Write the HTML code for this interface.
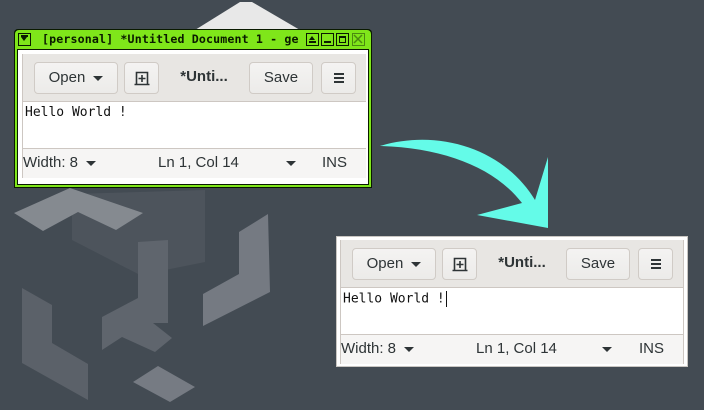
<!DOCTYPE html>
<html><head><meta charset="utf-8"><style>
*{margin:0;padding:0;box-sizing:border-box}
body{width:704px;height:410px;background:#434b53;position:relative;overflow:hidden;font-family:"Liberation Sans","DejaVu Sans",sans-serif}
.abs{position:absolute}
.win{position:absolute;width:344px;height:124px;background:#e8e6e3}
.tb{position:absolute;left:0;top:0;width:100%;height:48px;background:#e8e6e3;border-bottom:1px solid #cdc7c2}
.btn{position:absolute;top:8px;height:32px;background:linear-gradient(#f4f3f2,#ecebe9);border:1px solid #d0cbc6;border-radius:4px;font-size:15px;color:#2e3436;line-height:30px;text-align:center}
.txt{position:absolute;left:0;top:48px;width:100%;height:47px;background:#fff;border-bottom:1px solid #cdc7c2}
.mono{position:absolute;left:2px;top:3px;font-family:"DejaVu Sans Mono","Liberation Mono",monospace;font-size:13px;color:#111;white-space:nowrap}
.st{position:absolute;left:0;top:95px;width:100%;height:29px;background:#f6f5f4;font-size:15px;color:#2e3436;line-height:28px}
.si{position:absolute;top:0;white-space:nowrap}
.tri{display:inline-block;width:0;height:0;border-left:5px solid transparent;border-right:5px solid transparent;border-top:5px solid #2e3436;vertical-align:middle;margin-left:8px}
.tbx{position:absolute;top:3px;width:13px;height:13px;border:1.5px solid #0a1a00;background:#7fe61a}
</style></head><body>
<svg class="abs" style="left:0;top:0" width="704" height="410">
<polygon points="195,30 240,2 252,2 300,30" fill="#e8e8e8"/>
<polygon points="72,194 205,190 205,262 140,275 72,240" fill="#4d545c"/>
<polygon points="14,213 70,188 143,213 116,230 78,212 43,231" fill="#858a90"/>
<polygon points="239,232 268,214 270,292 203,326 203,294 239,274" fill="#757a82"/>
<polygon points="22,288 52,305 52,343 88,364 88,400 22,363" fill="#5b6169"/>
<polygon points="102,317 138,298 138,242 168,240 168,323 153,323 172,338 155,352 122,337 102,350" fill="#5f656d"/>
<polygon points="133,382 158,366 195,387 170,402" fill="#767b83"/>
<path d="M380,146 C440,128 505,150 535,200 L548,157 L548,228 L477,215 L522,203 C495,168 445,148 380,146 Z" fill="#64fbe8"/>
</svg>

<div class="abs" style="left:14px;top:29px;width:358px;height:159px;background:#0a1a00;border-radius:4px 4px 0 0"></div>
<div class="abs" style="left:15px;top:30px;width:356px;height:157px;background:#7fe61a;border-radius:4px 4px 0 0"></div>
<div class="abs" style="left:17px;top:49px;width:352px;height:136px;background:#0a1a00"></div>
<div class="abs" style="left:18px;top:50px;width:350px;height:134px;background:#fff"></div>
<div class="tbx" style="left:18px;top:33px"><div style="position:absolute;left:2px;top:3px;border-left:3.5px solid transparent;border-right:3.5px solid transparent;border-top:4px solid #0a1a00"></div><div style="position:absolute;left:2px;top:1px;width:7px;height:1.5px;background:#0a1a00"></div></div>
<div class="abs" style="left:42px;top:32px;font-family:'DejaVu Sans Mono',monospace;font-weight:bold;font-size:11.6px;letter-spacing:0.15px;color:#0a1a00;white-space:nowrap;width:260px;overflow:hidden">[personal] *Untitled Document 1 - ge</div>
<div class="tbx" style="left:306px;top:33px"><div style="position:absolute;left:2px;top:2px;border-left:3.5px solid transparent;border-right:3.5px solid transparent;border-bottom:4px solid #0a1a00"></div><div style="position:absolute;left:2px;top:7px;width:7px;height:1.5px;background:#0a1a00"></div></div>
<div class="tbx" style="left:321px;top:33px"><div style="position:absolute;left:2px;top:7px;width:7px;height:2px;background:#0a1a00"></div></div>
<div class="tbx" style="left:336px;top:33px"><div style="position:absolute;left:1.5px;top:1.5px;width:7px;height:7px;border:1.5px solid #0a1a00;border-top-width:2.5px"></div></div>
<div class="tbx" style="left:352px;top:33px;border-color:#4a8a10"><svg width="10" height="10" style="position:absolute;left:0;top:0"><path d="M1,1 L9,9 M9,1 L1,9" stroke="#4a8a10" stroke-width="1.5"/></svg></div>

<div class="win" style="left:22px;top:54px;border-left:1px solid #cdc7c2">
 <div class="tb"></div>
 <div class="btn" style="left:11px;width:84px">Open<span class="tri"></span></div>
 <div class="btn" style="left:101px;width:35px"><svg width="16" height="16" style="margin-top:7px"><path d="M2.5,14.5 V2.5 H13.5 V14.5 M0.5,14.5 H15.5 M8,5 V12 M4.5,8.5 H11.5" stroke="#2e3436" stroke-width="1.6" fill="none"/></svg></div>
 <div class="abs" style="left:136px;top:8px;width:90px;text-align:center;font-weight:bold;font-size:15px;line-height:30px;color:#2e3436">*Unti...</div>
 <div class="btn" style="left:226px;width:64px">Save</div>
 <div class="btn" style="left:298px;width:35px"><svg width="12" height="12" style="margin-top:9px"><path d="M1,2 H11 M1,6 H11 M1,10 H11" stroke="#2e3436" stroke-width="2"/></svg></div>
 <div class="txt"><span class="mono">Hello World !</span></div>
 <div class="st"><span class="si" style="left:0">Width: 8<span class="tri"></span></span><span class="si" style="left:135px">Ln 1, Col 14</span><span class="si" style="left:255px"><span class="tri"></span></span><span class="si" style="left:299px">INS</span></div>
</div>

<div class="abs" style="left:336px;top:236px;width:352px;height:131px;background:#fff;border:1px solid #c9c6c2"></div>
<div class="win" style="left:340px;top:240px;border-left:1px solid #cdc7c2;border-right:1px solid #cdc7c2">
 <div class="tb"></div>
 <div class="btn" style="left:11px;width:84px">Open<span class="tri"></span></div>
 <div class="btn" style="left:101px;width:35px"><svg width="16" height="16" style="margin-top:7px"><path d="M2.5,14.5 V2.5 H13.5 V14.5 M0.5,14.5 H15.5 M8,5 V12 M4.5,8.5 H11.5" stroke="#2e3436" stroke-width="1.6" fill="none"/></svg></div>
 <div class="abs" style="left:136px;top:8px;width:90px;text-align:center;font-weight:bold;font-size:15px;line-height:30px;color:#2e3436">*Unti...</div>
 <div class="btn" style="left:225px;width:64px">Save</div>
 <div class="btn" style="left:297px;width:35px"><svg width="12" height="12" style="margin-top:9px"><path d="M1,2 H11 M1,6 H11 M1,10 H11" stroke="#2e3436" stroke-width="2"/></svg></div>
 <div class="txt"><span class="mono">Hello World !<span style="display:inline-block;width:1px;height:16px;background:#111;vertical-align:middle;margin-left:1px"></span></span></div>
 <div class="st"><span class="si" style="left:0">Width: 8<span class="tri"></span></span><span class="si" style="left:135px">Ln 1, Col 14</span><span class="si" style="left:253px"><span class="tri"></span></span><span class="si" style="left:298px">INS</span></div>
</div>
</body></html>
